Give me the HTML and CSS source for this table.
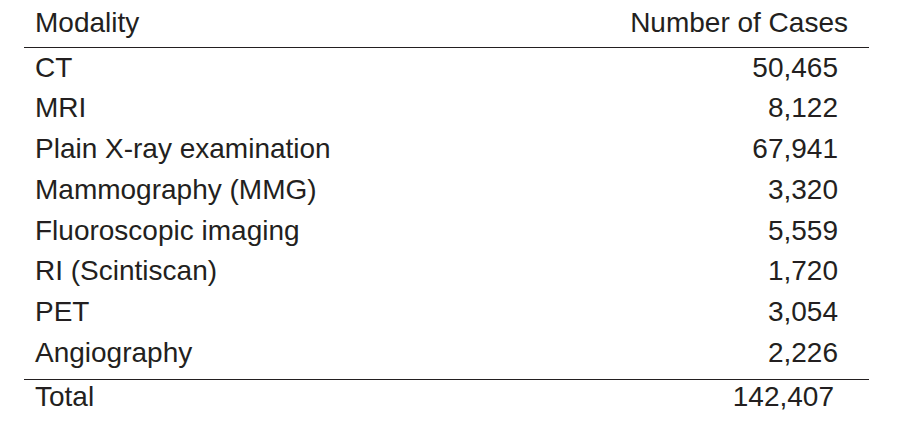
FILE: index.html
```html
<!DOCTYPE html>
<html lang="en">
<head>
<meta charset="utf-8">
<title>Modality cases</title>
<link rel="stylesheet" href="styles.css">
</head>
<body>
<table class="cases">
  <thead>
    <tr><th class="name head">Modality</th><th class="num head">Number of Cases</th></tr>
  </thead>
  <tbody>
    <tr class="first"><td class="name">CT</td><td class="num">50,465</td></tr>
    <tr><td class="name">MRI</td><td class="num">8,122</td></tr>
    <tr><td class="name">Plain X-ray examination</td><td class="num">67,941</td></tr>
    <tr><td class="name">Mammography (MMG)</td><td class="num">3,320</td></tr>
    <tr><td class="name">Fluoroscopic imaging</td><td class="num">5,559</td></tr>
    <tr><td class="name">RI (Scintiscan)</td><td class="num">1,720</td></tr>
    <tr><td class="name">PET</td><td class="num">3,054</td></tr>
    <tr class="last"><td class="name">Angiography</td><td class="num">2,226</td></tr>
  </tbody>
  <tfoot>
    <tr class="total"><td class="name">Total</td><td class="num">142,407</td></tr>
  </tfoot>
</table>
</body>
</html>
```
FILE: styles.css
```css
html, body {
  margin: 0;
  padding: 0;
  background: #ffffff;
}

body {
  font-family: "Liberation Sans", Arial, Helvetica, sans-serif;
  color: #231f20;
}

.cases {
  margin-left: 24px;
  width: 845px;
  border-collapse: collapse;
  font-size: 28px;
}

.cases th,
.cases td {
  padding: 0;
  font-weight: normal;
  line-height: 40.7px;
  white-space: nowrap;
}

.cases .name {
  text-align: left;
  padding-left: 11px;
}

.cases .num {
  text-align: right;
  padding-right: 31px;
}

.cases thead th {
  padding-top: 3px;
  padding-bottom: 3px;
  border-bottom: 1px solid #231f20;
}

.cases thead th.num {
  padding-right: 21px;
}

.cases tr.last td {
  padding-bottom: 6px;
}

.cases tfoot td {
  border-top: 1px solid #231f20;
  line-height: 34px;
}

.cases tfoot td.num {
  padding-right: 35px;
}
```
